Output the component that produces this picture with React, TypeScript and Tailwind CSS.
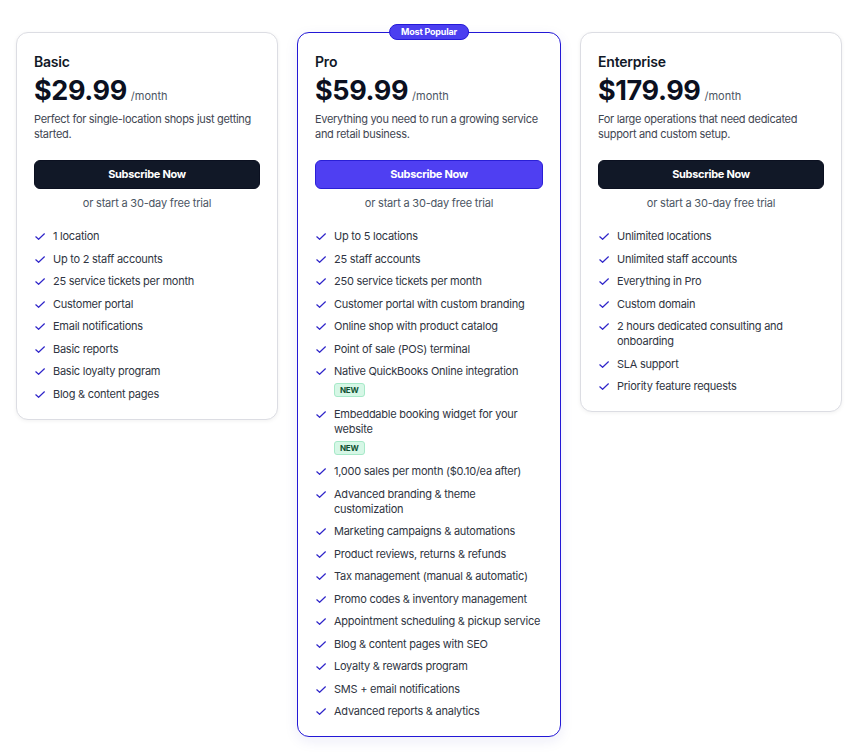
const plans = [
  {
    name: "Basic",
    price: "$29.99",
    blurb: "Perfect for single-location shops just getting started.",
    popular: false,
    features: [
      { text: "1 location" },
      { text: "Up to 2 staff accounts" },
      { text: "25 service tickets per month" },
      { text: "Customer portal" },
      { text: "Email notifications" },
      { text: "Basic reports" },
      { text: "Basic loyalty program" },
      { text: "Blog & content pages" },
    ],
  },
  {
    name: "Pro",
    price: "$59.99",
    blurb: "Everything you need to run a growing service and retail business.",
    popular: true,
    features: [
      { text: "Up to 5 locations" },
      { text: "25 staff accounts" },
      { text: "250 service tickets per month" },
      { text: "Customer portal with custom branding" },
      { text: "Online shop with product catalog" },
      { text: "Point of sale (POS) terminal" },
      { text: "Native QuickBooks Online integration", isNew: true },
      { text: "Embeddable booking widget for your website", isNew: true },
      { text: "1,000 sales per month ($0.10/ea after)" },
      { text: "Advanced branding & theme customization" },
      { text: "Marketing campaigns & automations" },
      { text: "Product reviews, returns & refunds" },
      { text: "Tax management (manual & automatic)" },
      { text: "Promo codes & inventory management" },
      { text: "Appointment scheduling & pickup service" },
      { text: "Blog & content pages with SEO" },
      { text: "Loyalty & rewards program" },
      { text: "SMS + email notifications" },
      { text: "Advanced reports & analytics" },
    ],
  },
  {
    name: "Enterprise",
    price: "$179.99",
    blurb: "For large operations that need dedicated support and custom setup.",
    popular: false,
    features: [
      { text: "Unlimited locations" },
      { text: "Unlimited staff accounts" },
      { text: "Everything in Pro" },
      { text: "Custom domain" },
      { text: "2 hours dedicated consulting and onboarding" },
      { text: "SLA support" },
      { text: "Priority feature requests" },
    ],
  },
];

function Check() {
  return (
    <svg width="12" height="15" viewBox="0 0 12 15" className="shrink-0 text-[#2f25c9]">
      <path d="M1.8 7.8 L4.6 10.3 L10.4 4.8" fill="none" stroke="currentColor" strokeWidth="1.2" strokeLinecap="round" strokeLinejoin="round" />
    </svg>
  );
}

export default function App() {
  return (
    <div className="min-h-screen bg-white px-4 pt-8 pb-4 font-['Inter',sans-serif] text-[#111827]">
      <div className="grid grid-cols-[262px_264px_262px] items-start gap-[19px]">
        {plans.map((plan) => (
          <div
            key={plan.name}
            className={`relative rounded-xl bg-white px-[17px] pt-[19px] pb-[17px] ${
              plan.popular
                ? "border border-[#2318d6] shadow-[0_4px_14px_rgba(30,27,160,0.08)]"
                : "border border-[#dcdde3] shadow-[0_1px_4px_rgba(0,0,0,0.06)]"
            }`}
          >
            {plan.popular && (
              <div className="absolute -top-[9px] left-1/2 -translate-x-1/2 rounded-full border border-[#2419d8] bg-[#4b3ff0] px-[11px] text-[9px] font-bold leading-[14px] tracking-[-0.2px] text-white">
                Most Popular
              </div>
            )}
            <h3 className="text-[14px] font-semibold leading-5 tracking-[-0.2px]">{plan.name}</h3>
            <div className="mt-[3px] flex items-baseline gap-[4px]">
              <span className="text-[27px] font-bold leading-8 tracking-[-0.4px] text-[#0b1020]">{plan.price}</span>
              <span className="text-[11px] text-[#4b5563]">/month</span>
            </div>
            <p className="mt-[5px] text-[11px] leading-[15px] tracking-[-0.3px] text-[#3f4652]">{plan.blurb}</p>
            <button
              className={`mt-[18px] flex h-[29px] w-full items-center justify-center rounded-md border text-[11px] font-bold tracking-[-0.3px] text-white ${
                plan.popular ? "border-[#2a1fd6] bg-[#4f3ff2]" : "border-[#0b1020] bg-[#111827]"
              }`}
            >
              Subscribe Now
            </button>
            <p className="mt-[7px] text-center text-[11px] leading-[15px] tracking-[-0.2px] text-[#4b5563]">
              or start a 30-day free trial
            </p>
            <ul className="mt-[18px] flex flex-col gap-[7.5px]">
              {plan.features.map((f) => (
                <li key={f.text} className="flex gap-[7px]">
                  <Check />
                  <div className="text-[11px] leading-[15px] tracking-[-0.25px] text-[#2f3542]">
                    <div>{f.text}</div>
                    {f.isNew && (
                      <span className="mt-[4px] mb-[2px] inline-block rounded-[3px] border border-[#a7e9c8] bg-[#d6f7e6] px-[5px] text-[8px] font-bold leading-[12px] text-[#0f5132]">
                        NEW
                      </span>
                    )}
                  </div>
                </li>
              ))}
            </ul>
          </div>
        ))}
      </div>
    </div>
  );
}
